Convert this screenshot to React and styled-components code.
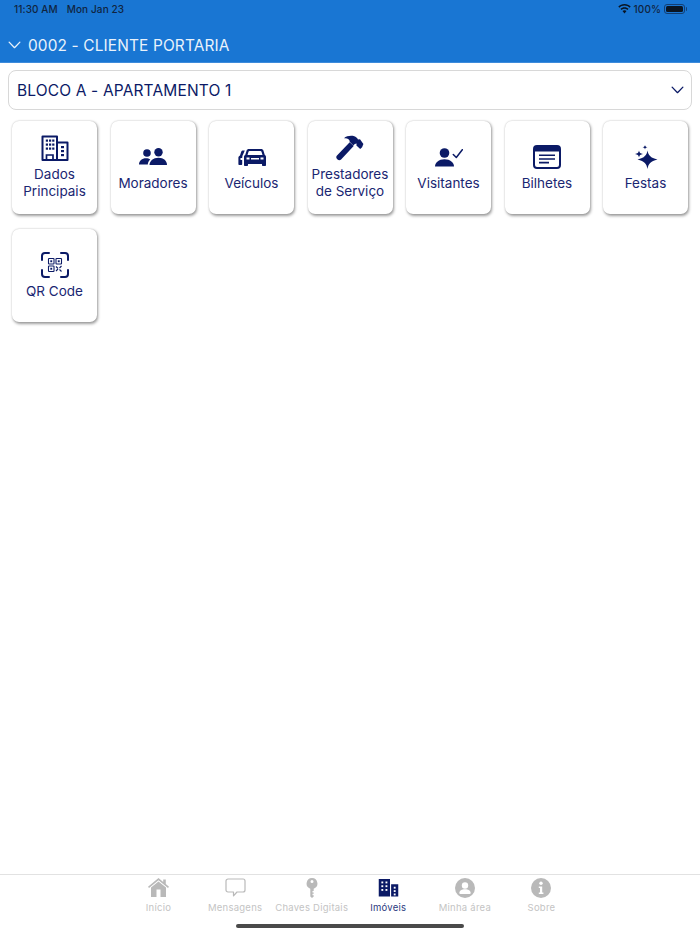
import React from "react";
import styled, { createGlobalStyle } from "styled-components";

const NAVY = "#0b1a66";
const GRAY = "#b9b9b9";

const Global = createGlobalStyle`
  html, body { margin: 0; padding: 0; background: #fff; }
  * { box-sizing: border-box; }
  #root { width: 700px; height: 934px; }
`;

const Page = styled.div`
  width: 700px;
  height: 934px;
  display: flex;
  flex-direction: column;
  font-family: Inter, "Liberation Sans", sans-serif;
  background: #fff;
  position: relative;
  overflow: hidden;
`;

const Header = styled.header`
  height: 63px;
  background: #1976d3;
  border-bottom: 1px solid #3d8bdb;
  display: flex;
  flex-direction: column;
`;

const StatusBar = styled.div`
  height: 18px;
  padding: 0 13px 0 14px;
  display: flex;
  align-items: center;
  justify-content: space-between;
  font-size: 10px;
  font-weight: 500;
  letter-spacing: 0.1px;
  color: #10243f;
`;

const StatusLeft = styled.div`
  display: flex;
  gap: 9px;
`;

const StatusRight = styled.div`
  display: flex;
  align-items: center;
  gap: 3px;
`;

const Battery = styled.span`
  width: 21px;
  height: 10px;
  margin-right: 2px;
  border: 1px solid #123f74;
  border-radius: 3px;
  padding: 1px;
  display: block;
  position: relative;
  &::before {
    content: "";
    display: block;
    height: 100%;
    background: #0a1522;
    border-radius: 1.5px;
  }
  &::after {
    content: "";
    position: absolute;
    right: -3px;
    top: 2px;
    width: 1.5px;
    height: 4px;
    background: #123f74;
    border-radius: 0 1px 1px 0;
  }
`;

const TitleBar = styled.div`
  flex: 1;
  display: flex;
  align-items: center;
  padding: 10px 0 0 8px;
  gap: 7px;
  color: #e9f2fb;
  font-size: 15.4px;
  font-weight: 400;
  letter-spacing: 0.15px;
`;

const Content = styled.main`
  flex: 1;
  padding: 7px 8px 0;
`;

const SelectBox = styled.div`
  height: 40px;
  border: 1px solid #d8d8d8;
  border-radius: 8px;
  display: flex;
  align-items: center;
  justify-content: space-between;
  padding: 0 7px 0 8px;
  color: ${NAVY};
  font-size: 15.5px;
  letter-spacing: 0.15px;
`;

const Grid = styled.div`
  display: grid;
  grid-template-columns: repeat(7, 85px);
  gap: 15px 13.5px;
  padding: 11px 0 0 4px;
`;

const Card = styled.div`
  height: 93px;
  background: #fff;
  border-radius: 7px;
  box-shadow: 1px 1.5px 3px rgba(0, 0, 0, 0.38), 0 0 1.5px rgba(0, 0, 0, 0.18);
  display: flex;
  flex-direction: column;
  align-items: center;
  justify-content: ${(p) => (p.$two ? "flex-start" : "center")};
  padding-top: ${(p) => (p.$two ? "13px" : "0")};
  padding-bottom: ${(p) => (p.$two ? "0" : "1px")};
  color: ${NAVY};
`;

const IconSlot = styled.div`
  height: 28px;
  display: flex;
  align-items: center;
  justify-content: center;
  margin-bottom: ${(p) => (p.$two ? "4px" : "4px")};
`;

const CardLabel = styled.div`
  font-size: 13.5px;
  line-height: 17px;
  text-align: center;
  color: #1a2672;
  white-space: pre-line;
`;

const TabBar = styled.nav`
  height: 60px;
  border-top: 1px solid #e2e2e2;
  display: flex;
  justify-content: center;
  align-items: flex-start;
`;

const Tab = styled.div`
  width: 76.6px;
  display: flex;
  flex-direction: column;
  align-items: center;
  padding-top: 2px;
  color: ${(p) => (p.$active ? NAVY : GRAY)};
`;

const TabIcon = styled.div`
  height: 21px;
  display: flex;
  align-items: center;
  justify-content: center;
`;

const TabLabel = styled.span`
  margin-top: 4px;
  font-size: 9.5px;
  line-height: 12px;
  letter-spacing: 0.25px;
  white-space: nowrap;
  color: ${(p) => (p.$active ? "#2c3a80" : "#c4c4c4")};
  font-weight: 400;
`;

const HomeIndicator = styled.div`
  position: absolute;
  left: 236px;
  bottom: 6px;
  width: 228px;
  height: 4px;
  border-radius: 2px;
  background: #4a4a4a;
`;

const Chevron = ({ size = 14, color = "currentColor" }) => (
  <svg width={size} height={size * 0.6} viewBox="0 0 14 8.4" fill="none">
    <path d="M1.2 1.2 7 7.2l5.8-6" stroke={color} strokeWidth="1.4" strokeLinecap="round" strokeLinejoin="round" />
  </svg>
);

const Wifi = () => (
  <svg width="13" height="10" viewBox="0 0 13 10" fill="#0a1522">
    <path d="M6.5 0C4 0 1.9 1 .3 2.5l1.1 1.2C2.7 2.4 4.5 1.6 6.5 1.6s3.8.8 5.1 2.1l1.1-1.2C11.100 1 9 0 6.500 0Z" />
    <path d="M6.500 3.200c-1.600 0-3 .6-4 1.600l1.100 1.200c.8-.7 1.800-1.200 2.900-1.200s2.100.5 2.900 1.200l1.100-1.200c-1-1-2.400-1.600-4-1.600Z" />
    <path d="M6.500 6.300c-.8 0-1.500.3-2 .8L6.500 9.500l2-2.400c-.5-.5-1.200-.8-2-.8Z" />
  </svg>
);

const Building = ({ size = 28, filled }) => (
  <svg width={size} height={size} viewBox="0 0 28 28" fill="none">
    {filled ? (
      <>
        <path d="M1 2.500h15v23.500H1zM17.500 9.500H27V26h-9.500z" fill="currentColor" />
        <g fill="#fff">
          <rect x="4.500" y="6" width="2.500" height="2.500" /><rect x="10" y="6" width="2.500" height="2.500" />
          <rect x="4.500" y="11" width="2.500" height="2.500" /><rect x="10" y="11" width="2.500" height="2.500" />
          <rect x="4.500" y="16" width="2.500" height="2.500" /><rect x="10" y="16" width="2.500" height="2.500" />
          <rect x="21" y="13" width="2.500" height="2.500" /><rect x="21" y="17.500" width="2.500" height="2.500" /><rect x="21" y="22" width="2.500" height="2.500" />
        </g>
      </>
    ) : (
      <>
        <path d="M1.500 2.500h14.500V26H1.500zM16 8.500h10.500V26H16z" stroke="currentColor" strokeWidth="2" strokeLinejoin="round" />
        <path d="M5.500 26v-5h6.500v5" stroke="currentColor" strokeWidth="1.700" />
        <g fill="currentColor">
          <rect x="4.800" y="5.500" width="2.200" height="2.200" /><rect x="8" y="5.500" width="2.200" height="2.200" /><rect x="11.200" y="5.500" width="2.200" height="2.200" />
          <rect x="4.800" y="9.500" width="2.200" height="2.200" /><rect x="8" y="9.500" width="2.200" height="2.200" /><rect x="11.200" y="9.500" width="2.200" height="2.200" />
          <rect x="4.800" y="13.500" width="2.200" height="2.200" /><rect x="8" y="13.500" width="2.200" height="2.200" /><rect x="11.200" y="13.500" width="2.200" height="2.200" />
          <rect x="20" y="12" width="3" height="2.200" /><rect x="20" y="16" width="3" height="2.200" /><rect x="20" y="20" width="3" height="2.200" />
        </g>
      </>
    )}
  </svg>
);

const People = () => (
  <svg width="28" height="18" viewBox="0 0 28 18" fill="currentColor">
    <circle cx="8" cy="5" r="3.800" />
    <circle cx="19.500" cy="4.300" r="4.200" />
    <path d="M0 16.500c0-3.600 3-6.300 7-6.300 1.700 0 3.200.5 4.300 1.300-1.500 1.300-2.400 3-2.500 5Z" />
    <path d="M10.500 17c0-4 3.800-7.200 9-7.200s8.500 3.200 8.500 7.200Z" />
  </svg>
);

const Cars = () => (
  <svg width="28" height="18" viewBox="0 0 28 18" fill="currentColor">
    <path fillRule="evenodd" d="M11 1C9.800 1 9 1.500 8.600 2.500L7.300 6.800c-.9.5-1.300 1.300-1.300 2.300V17c0 .6.400 1 1 1h2c.6 0 1-.4 1-1v-1h14v1c0 .6.400 1 1 1h2c.6 0 1-.4 1-1V9.100c0-1-.5-1.800-1.300-2.300L25.400 2.500C25 1.500 24.200 1 23 1ZM11.500 3h11c.5 0 .8.200 1 .7l1 3.300H9.500l1-3.300c.2-.5.500-.7 1-.7ZM8.500 9.500h3v2h-3Zm14 0h3v2h-3ZM13 10h8v1.500h-8Z" />
    <path d="M6.800 2.500H5.200c-1 0-1.700.4-2 1.300L2 7.500C1 8 .4 8.800.4 9.800V16c0 .6.400 1 1 1h1.800c.6 0 1-.4 1-1V9.500c0-1.200.4-2.300 1-3.200Zm-4.300 7.500h1.700v2H2.500Z" />
  </svg>
);

const Hammer = () => (
  <svg width="28" height="26" viewBox="0 0 28 26" fill="currentColor">
    <path d="M8 3.200C10.500 1 15 .3 18.300 1.300c1.600.5 2.800 1.600 3.700 3.200l2-.2 3.400 4.600-1.300 3.400-1.900 1.700-3.800-3.500.2-1.900-1.800.3-1.500 1.600-3.600-3.700C13.800 4 11.500 2.900 8 3.200Z" />
    <path d="M13.700 7.200 17.700 11 5.100 24.500c-1 1-2.500 1-3.500.1L1 24c-1-1-1-2.400 0-3.400Z" />
  </svg>
);

const Visitor = () => (
  <svg width="28" height="20" viewBox="0 0 28 20" fill="none">
    <circle cx="9.500" cy="6" r="4.800" fill="currentColor" />
    <path d="M0 19.500c0-3.900 3.800-7.200 9.500-7.200s9.500 3.300 9.500 7.200Z" fill="currentColor" />
    <path d="M18.300 7.500l3 3L27.300 2.700" stroke="currentColor" strokeWidth="1.500" strokeLinecap="round" strokeLinejoin="round" />
  </svg>
);

const Ticket = () => (
  <svg width="28" height="24" viewBox="0 0 28 24" fill="none">
    <rect x="1" y="1" width="26" height="22" rx="3" stroke="currentColor" strokeWidth="2" />
    <path d="M1 4a3 3 0 0 1 3-3h20a3 3 0 0 1 3 3v2.500H1Z" fill="currentColor" />
    <path d="M6 10.300h16M6 14h16M6 17.600h10" stroke="currentColor" strokeWidth="1.600" />
  </svg>
);

const Sparkles = () => (
  <svg width="24" height="26" viewBox="0 0 24 26" fill="currentColor">
    <path d="M13.500 6.500c.9 4.700 2.800 7.300 10 9-7.200 1.700-9.100 4.300-10 9.500-.9-5.200-2.800-7.800-10-9.500 7.200-1.700 9.100-4.300 10-9Z" />
    <path d="M5 6.500c.5 2.300 1.300 3 4 3.500-2.700.500-3.500 1.200-4 3.500C4.500 11.200 3.700 10.500 1 10c2.700-.5 3.500-1.200 4-3.500Z" />
    <path d="M11 1c.3 1.500.8 2 2.500 2.300-1.700.3-2.200.8-2.500 2.300-.3-1.500-.8-2-2.500-2.300C10.200 3 10.700 2.500 11 1Z" />
  </svg>
);

const QrCode = () => (
  <svg width="28" height="26" viewBox="0 0 28 26" fill="none">
    <path d="M1 8V4a3 3 0 0 1 3-3h4M20 1h4a3 3 0 0 1 3 3v4M27 18v4a3 3 0 0 1-3 3h-4M8 25H4a3 3 0 0 1-3-3v-4" stroke="currentColor" strokeWidth="2" strokeLinecap="round" />
    <g stroke="currentColor" strokeWidth="1.100">
      <rect x="7.500" y="6.500" width="5.500" height="5.500" rx=".6" />
      <rect x="15" y="6.500" width="5.500" height="5.500" rx=".6" />
      <rect x="7.500" y="14" width="5.500" height="5.500" rx=".6" />
      <path d="M15 14.500l2 2m1.500 1 2 2m0-5.500-2 2m-1.500 1-2 2" />
    </g>
    <g fill="currentColor">
      <rect x="9.300" y="8.300" width="1.900" height="1.900" />
      <rect x="16.800" y="8.300" width="1.900" height="1.900" />
      <rect x="9.300" y="15.800" width="1.900" height="1.900" />
    </g>
  </svg>
);

const Home = () => (
  <svg width="21" height="19" viewBox="0 0 21 19" fill="currentColor">
    <path d="M10.500 0 0 8.800l1 1.100 9.500-7.700 9.500 7.700 1-1.100-3.200-2.700V1.500h-2.600v2.400Z" />
    <path fillRule="evenodd" d="M10.500 3.500 3 9.600V19h15V9.600ZM8.500 11.500h4V19h-4Z" />
  </svg>
);

const Bubble = () => (
  <svg width="21" height="19" viewBox="0 0 21 19" fill="none">
    <path d="M3 1h15a2 2 0 0 1 2 2v9a2 2 0 0 1-2 2h-6l-3.500 3.800V14H3a2 2 0 0 1-2-2V3a2 2 0 0 1 2-2Z" stroke="currentColor" strokeWidth="1.200" strokeLinejoin="round" />
  </svg>
);

const Key = () => (
  <svg width="12" height="20" viewBox="0 0 12 20" fill="currentColor">
    <path fillRule="evenodd" d="M6 0a5.500 5.500 0 0 0-1.700 10.700V18.500L6 20l1.700-1.500v-1.300H6.500v-1.400h1.200V14.400H6.500V13h1.200v-2.300A5.500 5.500 0 0 0 6 0Zm0 2a1.500 1.500 0 1 1 0 3 1.500 1.500 0 0 1 0-3Z" />
  </svg>
);

const UserCircle = () => (
  <svg width="20" height="20" viewBox="0 0 20 20">
    <circle cx="10" cy="10" r="10" fill="currentColor" />
    <circle cx="10" cy="7.500" r="3.200" fill="#fff" />
    <path d="M4.300 15c0-2.300 2.500-3.700 5.700-3.700s5.700 1.400 5.700 3.700c0 .6-.4.900-1 .9H5.300c-.6 0-1-.3-1-.9Z" fill="#fff" />
  </svg>
);

const InfoCircle = () => (
  <svg width="20" height="20" viewBox="0 0 20 20">
    <circle cx="10" cy="10" r="10" fill="currentColor" />
    <circle cx="10" cy="5.300" r="1.700" fill="#fff" />
    <path d="M7.800 8.500h3.400v6h1.200v1.500H7.800v-1.500H9V10H7.800Z" fill="#fff" />
  </svg>
);

const cards = [
  { label: "Dados\nPrincipais", icon: <Building />, two: true },
  { label: "Moradores", icon: <People /> },
  { label: "Veículos", icon: <Cars /> },
  { label: "Prestadores\nde Serviço", icon: <Hammer />, two: true },
  { label: "Visitantes", icon: <Visitor /> },
  { label: "Bilhetes", icon: <Ticket /> },
  { label: "Festas", icon: <Sparkles /> },
  { label: "QR Code", icon: <QrCode /> },
];

const tabs = [
  { label: "Início", icon: <Home /> },
  { label: "Mensagens", icon: <Bubble /> },
  { label: "Chaves Digitais", icon: <Key /> },
  { label: "Imóveis", icon: <Building size={21} filled />, active: true },
  { label: "Minha área", icon: <UserCircle /> },
  { label: "Sobre", icon: <InfoCircle /> },
];

export default function App() {
  return (
    <Page>
      <Global />
      <Header>
        <StatusBar>
          <StatusLeft>
            <span>11:30 AM</span>
            <span>Mon Jan 23</span>
          </StatusLeft>
          <StatusRight>
            <Wifi />
            <span>100%</span>
            <Battery />
          </StatusRight>
        </StatusBar>
        <TitleBar>
          <Chevron size={13} />
          <span>0002 - CLIENTE PORTARIA</span>
        </TitleBar>
      </Header>
      <Content>
        <SelectBox>
          <span>BLOCO A - APARTAMENTO 1</span>
          <Chevron size={13} />
        </SelectBox>
        <Grid>
          {cards.map((c) => (
            <Card key={c.label} $two={c.two}>
              <IconSlot $two={c.two}>{c.icon}</IconSlot>
              <CardLabel>{c.label}</CardLabel>
            </Card>
          ))}
        </Grid>
      </Content>
      <TabBar>
        {tabs.map((t) => (
          <Tab key={t.label} $active={t.active}>
            <TabIcon>{t.icon}</TabIcon>
            <TabLabel $active={t.active}>{t.label}</TabLabel>
          </Tab>
        ))}
      </TabBar>
      <HomeIndicator />
    </Page>
  );
}
